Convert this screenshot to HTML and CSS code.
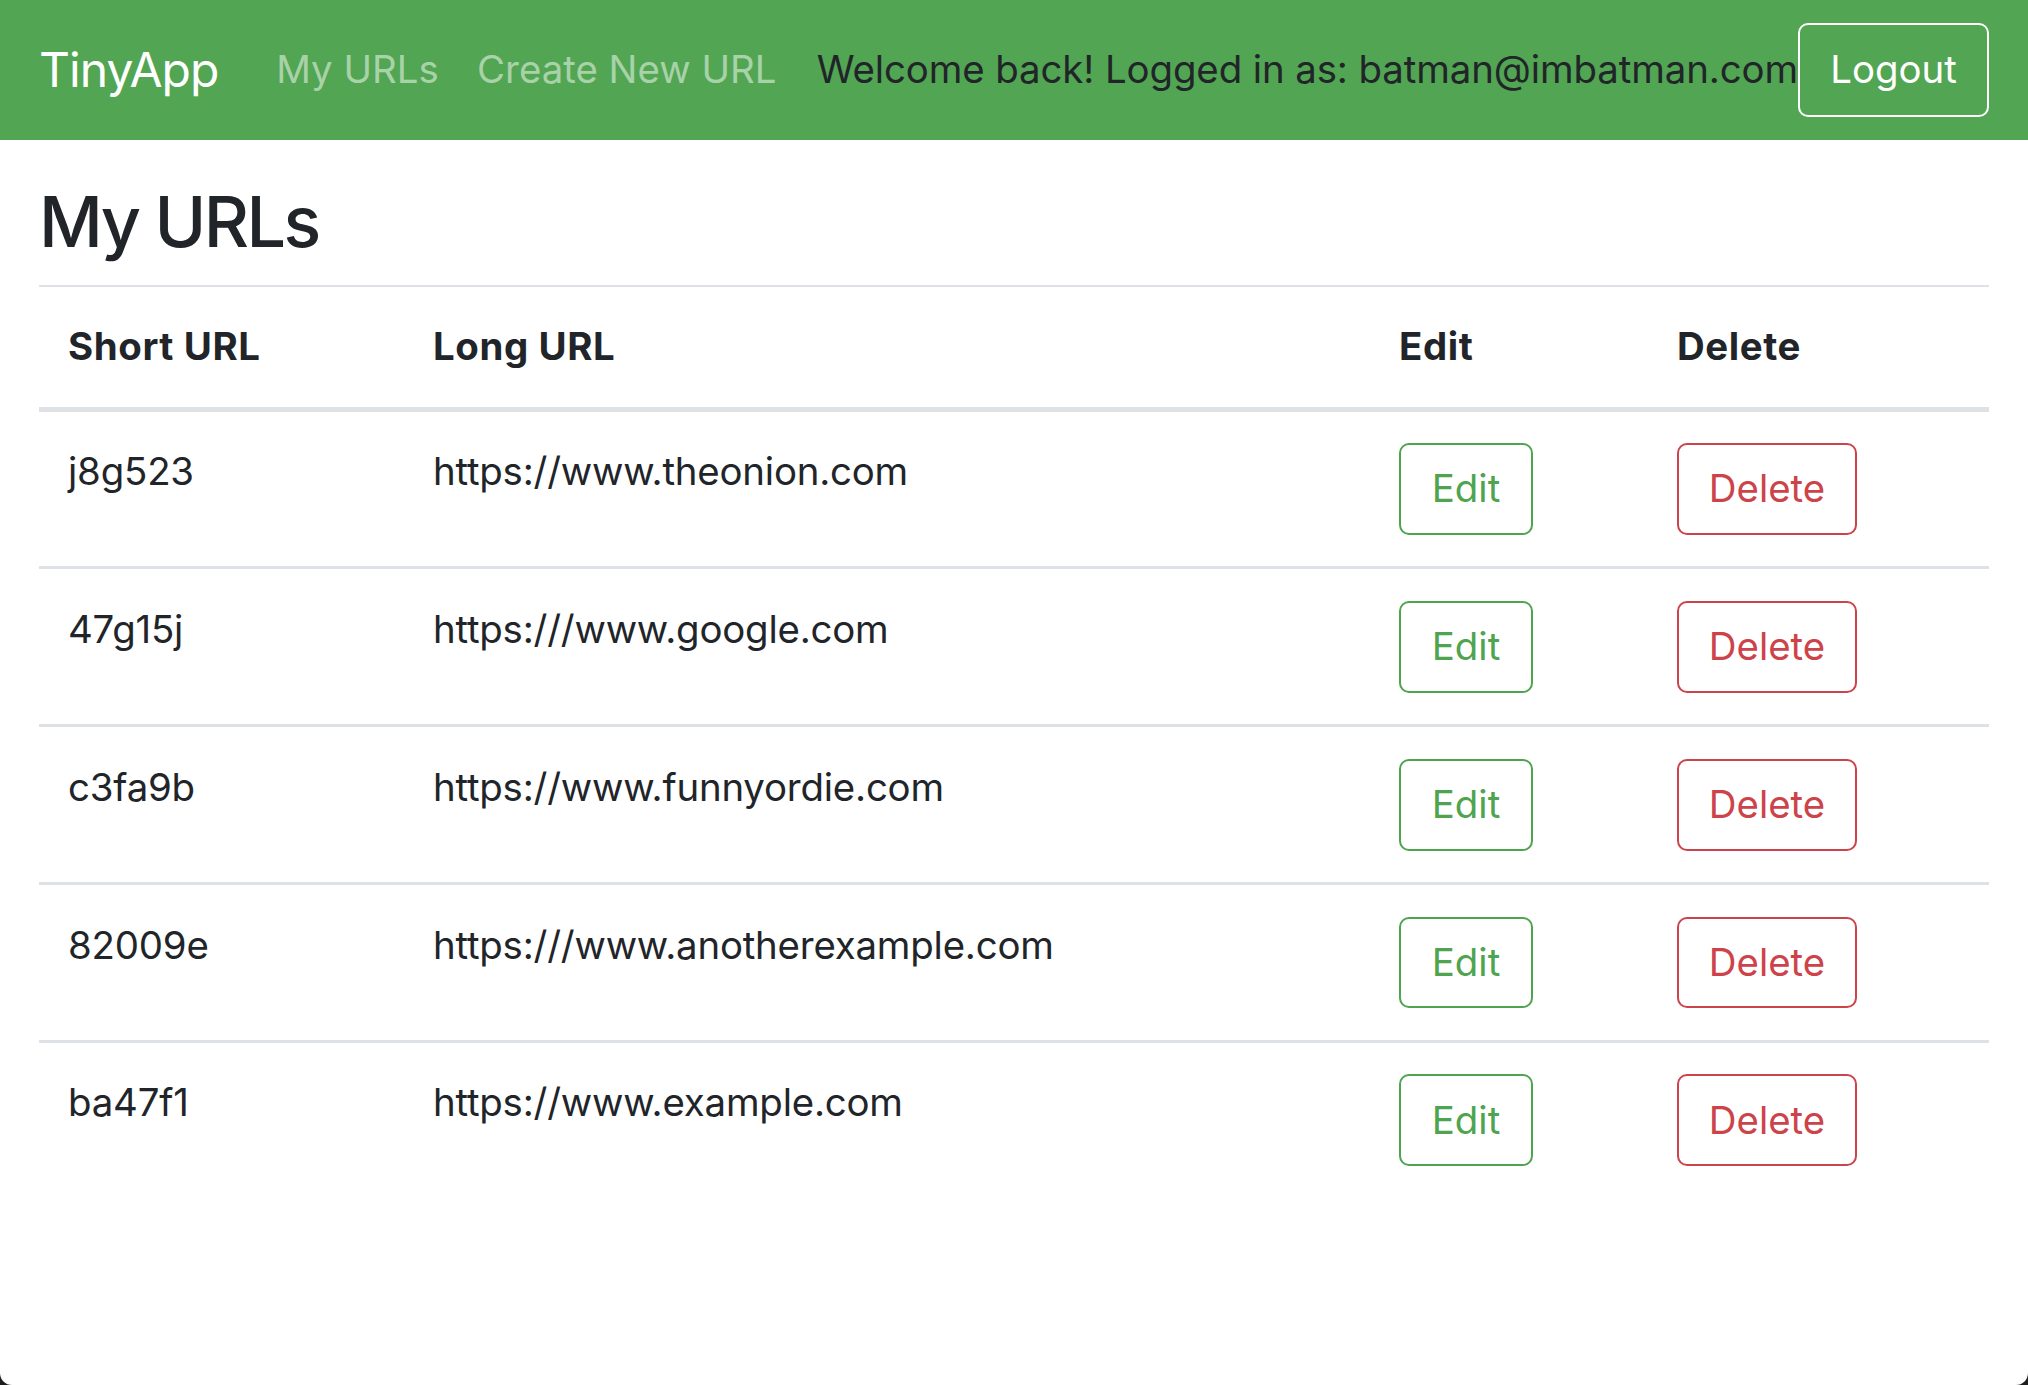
FILE: index.html
```html
<!DOCTYPE html>
<html lang="en">
<head>
<meta charset="utf-8">
<title>TinyApp</title>
<link rel="stylesheet" href="styles.css">
</head>
<body>
<div class="window">
  <nav class="navbar">
    <a class="brand" href="#">TinyApp</a>
    <ul class="nav-links">
      <li><a class="nav-link" href="#">My URLs</a></li>
      <li><a class="nav-link" href="#">Create New URL</a></li>
    </ul>
    <div class="nav-right">
      <span class="navbar-text">Welcome back! Logged in as: batman@imbatman.com</span>
      <form class="logout-form"><button type="button" class="btn btn-logout">Logout</button></form>
    </div>
  </nav>
  <main class="content">
    <h2 class="page-title">My URLs</h2>
    <table class="url-table">
      <colgroup>
        <col class="col-short">
        <col class="col-long">
        <col class="col-edit">
        <col class="col-delete">
      </colgroup>
      <thead>
        <tr><th>Short URL</th><th>Long URL</th><th>Edit</th><th>Delete</th></tr>
      </thead>
      <tbody>
        <tr>
          <td>j8g523</td><td>https://www.theonion.com</td>
          <td><a class="btn btn-edit" href="#">Edit</a></td>
          <td><form><button type="button" class="btn btn-delete">Delete</button></form></td>
        </tr>
        <tr>
          <td>47g15j</td><td>https:///www.google.com</td>
          <td><a class="btn btn-edit" href="#">Edit</a></td>
          <td><form><button type="button" class="btn btn-delete">Delete</button></form></td>
        </tr>
        <tr>
          <td>c3fa9b</td><td>https://www.funnyordie.com</td>
          <td><a class="btn btn-edit" href="#">Edit</a></td>
          <td><form><button type="button" class="btn btn-delete">Delete</button></form></td>
        </tr>
        <tr>
          <td>82009e</td><td>https:///www.anotherexample.com</td>
          <td><a class="btn btn-edit" href="#">Edit</a></td>
          <td><form><button type="button" class="btn btn-delete">Delete</button></form></td>
        </tr>
        <tr>
          <td>ba47f1</td><td>https://www.example.com</td>
          <td><a class="btn btn-edit" href="#">Edit</a></td>
          <td><form><button type="button" class="btn btn-delete">Delete</button></form></td>
        </tr>
      </tbody>
    </table>
  </main>
</div>
</body>
</html>
```
FILE: styles.css
```css
* { box-sizing: border-box; }

html {
  background: #1e1e1e;
}

body {
  margin: 0;
  font-family: Inter, "Liberation Sans", sans-serif;
  font-size: 38.4px;
  line-height: 1.5;
  color: #212529;
}

.window {
  background: #fff;
  min-height: 1385px;
  border-bottom-left-radius: 12px;
  border-bottom-right-radius: 12px;
  overflow: hidden;
}

a { text-decoration: none; }

form { margin: 0; }

/* Navbar */
.navbar {
  display: flex;
  align-items: center;
  height: 140px;
  padding: 0 39px;
  background: #52a552;
}

.brand {
  font-size: 48px;
  line-height: 72px;
  letter-spacing: -0.9px;
  color: #fff;
  margin-right: 38.4px;
}

.nav-links {
  display: flex;
  list-style: none;
  margin: 0;
  padding: 0;
}

.nav-link {
  display: block;
  padding: 0 19.2px;
  color: rgba(255, 255, 255, 0.5);
}

.nav-right {
  display: flex;
  align-items: center;
  margin-left: auto;
}

.navbar-text {
  color: #212529;
  letter-spacing: -0.1px;
}

.btn {
  display: inline-block;
  font-family: inherit;
  font-size: 38.4px;
  line-height: 57.6px;
  padding: 15.2px 0;
  border: 2px solid transparent;
  border-radius: 10px;
  background: transparent;
  text-align: center;
  cursor: pointer;
}

.btn-logout {
  width: 191px;
  height: 94px;
  padding: 16.2px 0;
  color: #fff;
  border-color: #fff;
}

/* Content */
.content {
  padding: 40px 39px 0;
}

.page-title {
  margin: 0 0 21px;
  font-size: 70px;
  font-weight: 500;
  letter-spacing: -2.6px;
  line-height: 1.2;
}

.url-table {
  width: 100%;
  border-collapse: collapse;
  table-layout: fixed;
}

.col-short { width: 365px; }
.col-long { width: 966px; }
.col-edit { width: 278px; }
.col-delete { width: auto; }

.url-table th,
.url-table td {
  text-align: left;
  vertical-align: top;
  padding: 31.5px 29px;
  letter-spacing: -0.2px;
}

.url-table thead th {
  font-weight: 700;
  letter-spacing: 0.6px;
  padding: 31px 29px;
  border-top: 2px solid #dee2e6;
  border-bottom: 5px solid #dee2e6;
}

.url-table tbody tr:first-child td {
  padding-top: 31px;
}

.url-table tbody tr + tr td {
  border-top: 3px solid #dee2e6;
}

.url-table .btn {
  letter-spacing: 0;
}

.btn-edit {
  width: 134px;
  color: #4fa44f;
  border-color: #4fa44f;
}

.btn-delete {
  width: 180px;
  color: #cd434a;
  border-color: #cd434a;
}
```
